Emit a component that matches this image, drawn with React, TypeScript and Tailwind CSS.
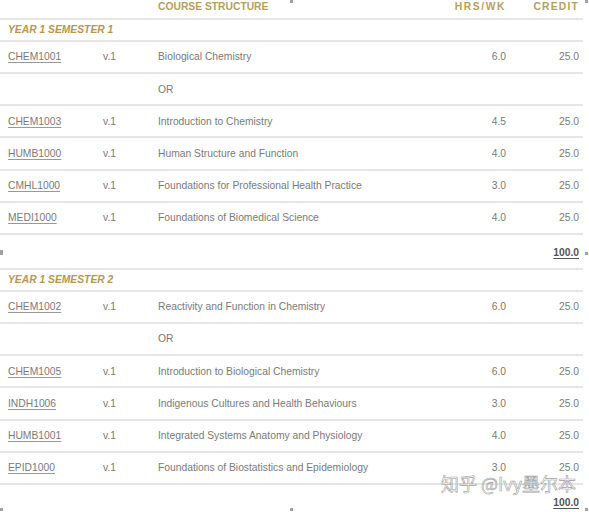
import React from "react";

type Row = { code?: string; title: string; hrs?: string; credit?: string };

const sem1: Row[] = [
  { code: "CHEM1001", title: "Biological Chemistry", hrs: "6.0", credit: "25.0" },
  { title: "OR" },
  { code: "CHEM1003", title: "Introduction to Chemistry", hrs: "4.5", credit: "25.0" },
  { code: "HUMB1000", title: "Human Structure and Function", hrs: "4.0", credit: "25.0" },
  { code: "CMHL1000", title: "Foundations for Professional Health Practice", hrs: "3.0", credit: "25.0" },
  { code: "MEDI1000", title: "Foundations of Biomedical Science", hrs: "4.0", credit: "25.0" },
];

const sem2: Row[] = [
  { code: "CHEM1002", title: "Reactivity and Function in Chemistry", hrs: "6.0", credit: "25.0" },
  { title: "OR" },
  { code: "CHEM1005", title: "Introduction to Biological Chemistry", hrs: "6.0", credit: "25.0" },
  { code: "INDH1006", title: "Indigenous Cultures and Health Behaviours", hrs: "3.0", credit: "25.0" },
  { code: "HUMB1001", title: "Integrated Systems Anatomy and Physiology", hrs: "4.0", credit: "25.0" },
  { code: "EPID1000", title: "Foundations of Biostatistics and Epidemiology", hrs: "3.0", credit: "25.0" },
];

const grid = "grid grid-cols-[8px_95px_55px_288px_60px_73px_4px] items-center";

function CourseRow({ r }: { r: Row }) {
  return (
    <div className={`${grid} h-[32.17px] border-b-2 border-[#e6e6e6] text-[10.3px] text-[#7a7a7a]`}>
      <div />
      <div>{r.code && <span className="underline underline-offset-2 decoration-[#999]">{r.code}</span>}</div>
      <div>{r.code ? "v.1" : ""}</div>
      <div>{r.title}</div>
      <div className="text-right">{r.hrs}</div>
      <div className="text-right">{r.credit}</div>
      <div />
    </div>
  );
}

function Semester({ label, rows }: { label: string; rows: Row[] }) {
  return (
    <>
      <div className="h-[22px] border-b-2 border-[#e6e6e6] flex items-center pl-2 text-[10.3px] font-bold italic text-[#b8964f]">
        {label}
      </div>
      {rows.map((r, i) => (
        <CourseRow key={i} r={r} />
      ))}
      <div className="h-[35px] border-b-2 border-[#e6e6e6] flex items-center justify-end pr-1 pt-[3px] text-[10.3px] font-bold text-[#555]">
        <span className="underline underline-offset-2">100.0</span>
      </div>
    </>
  );
}

function Handle({ cls }: { cls: string }) {
  return <div className={`absolute w-[3px] h-[3px] bg-[#a0a0a0] ${cls}`} />;
}

export default function App() {
  return (
    <div className="relative w-[589px] h-[512px] bg-white overflow-hidden font-['Liberation_Sans',Arial,sans-serif]">
      <div className="w-[583px]">
        <div className={`${grid} h-[20px] border-b-2 border-[#e6e6e6] items-start text-[10.3px] font-bold text-[#b89d60] leading-[12px] pt-px`}>
          <div />
          <div />
          <div />
          <div>COURSE STRUCTURE</div>
          <div className="text-right tracking-[1.6px]">HRS/WK</div>
          <div className="text-right tracking-[1.2px]">CREDIT</div>
          <div />
        </div>
        <Semester label="YEAR 1 SEMESTER 1" rows={sem1} />
        <Semester label="YEAR 1 SEMESTER 2" rows={sem2} />
      </div>

      <div className="absolute left-[441px] top-[473px] text-[18px] leading-[20px] text-white/70 [-webkit-text-stroke:0.6px_#a0a0a0] font-['Noto_Sans_CJK_SC','Liberation_Sans',sans-serif]">
        知乎 @Ivy墨尔本
      </div>

      <Handle cls="left-0 top-[250px] h-[5px]" />
      <Handle cls="left-[585px] top-[252px]" />
      <Handle cls="left-[290px] top-0" />
      <Handle cls="left-[585px] top-0" />
      <Handle cls="left-0 top-[508px]" />
      <Handle cls="left-[290px] top-[508px]" />
      <Handle cls="left-[585px] top-[508px]" />
    </div>
  );
}
